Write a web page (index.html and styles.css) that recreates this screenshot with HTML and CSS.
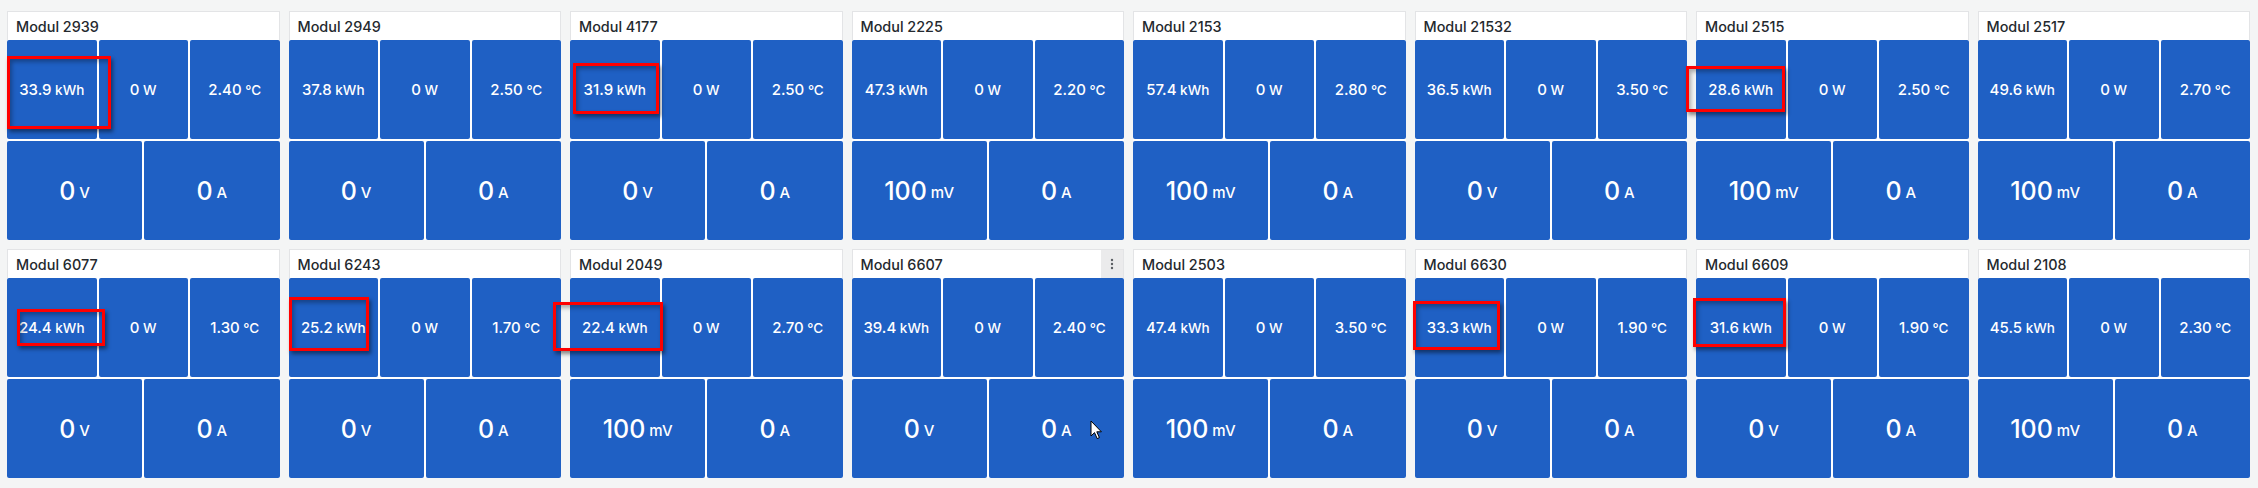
FILE: index.html
```html
<!DOCTYPE html>
<html lang="en">
  <head>
    <meta charset="UTF-8" />
    <meta name="viewport" content="width=device-width, initial-scale=1.0" />
    <title>Module</title>
    <link rel="stylesheet" href="styles.css">
  </head>
  <body>
    <div class="dashboard" id="dashboard"></div>
    <script>
      const dashboard = document.getElementById('dashboard')

      // mark = [left, top, width, height] of the red annotation box, relative to the panel
      const modules = [
        { name: 'Modul 2939', energy: '33.9', temp: '2.40', volt: '0', mark: [0, 45, 104, 73] },
        { name: 'Modul 2949', energy: '37.8', temp: '2.50', volt: '0' },
        { name: 'Modul 4177', energy: '31.9', temp: '2.50', volt: '0', mark: [3, 52, 86, 51] },
        { name: 'Modul 2225', energy: '47.3', temp: '2.20', volt: '100' },
        { name: 'Modul 2153', energy: '57.4', temp: '2.80', volt: '100' },
        { name: 'Modul 21532', energy: '36.5', temp: '3.50', volt: '0' },
        { name: 'Modul 2515', energy: '28.6', temp: '2.50', volt: '100', mark: [-10, 55, 99, 46] },
        { name: 'Modul 2517', energy: '49.6', temp: '2.70', volt: '100' },
        { name: 'Modul 6077', energy: '24.4', temp: '1.30', volt: '0', mark: [10, 60, 88, 37] },
        { name: 'Modul 6243', energy: '25.2', temp: '1.70', volt: '0', mark: [0, 48, 80, 54] },
        { name: 'Modul 2049', energy: '22.4', temp: '2.70', volt: '100', mark: [-17, 53, 110, 49] },
        { name: 'Modul 6607', energy: '39.4', temp: '2.40', volt: '0', hover: true },
        { name: 'Modul 2503', energy: '47.4', temp: '3.50', volt: '100' },
        { name: 'Modul 6630', energy: '33.3', temp: '1.90', volt: '0', mark: [-2, 52, 87, 49] },
        { name: 'Modul 6609', energy: '31.6', temp: '1.90', volt: '0', mark: [-3, 49, 93, 49] },
        { name: 'Modul 2108', energy: '45.5', temp: '2.30', volt: '100' },
      ]

      for (const mod of modules) {
        const panel = document.createElement('div')
        panel.className = 'panel'
        const voltUnit = mod.volt === '100' ? 'mV' : 'V'
        panel.innerHTML = `
          <div class="panel-header">
            <span class="panel-title">${mod.name}</span>
            ${mod.hover ? `<span class="panel-menu">
              <svg width="4" height="12" viewBox="0 0 4 12"><circle cx="2" cy="2" r="1.2"/><circle cx="2" cy="6" r="1.2"/><circle cx="2" cy="10" r="1.2"/></svg>
            </span>` : ''}
          </div>
          <div class="panel-body">
            <div class="stat">${mod.energy}<span class="unit"> kWh</span></div>
            <div class="stat">0<span class="unit"> W</span></div>
            <div class="stat">${mod.temp}<span class="unit"> °C</span></div>
            <div class="stat wide">${mod.volt}<span class="unit"> ${voltUnit}</span></div>
            <div class="stat wide">0<span class="unit"> A</span></div>
          </div>
        `
        if (mod.mark) {
          const [left, top, width, height] = mod.mark
          const mark = document.createElement('div')
          mark.className = 'mark'
          mark.style.left = left + 'px'
          mark.style.top = top + 'px'
          mark.style.width = width + 'px'
          mark.style.height = height + 'px'
          panel.appendChild(mark)
        }
        if (mod.hover) {
          const cursor = document.createElement('div')
          cursor.className = 'cursor'
          cursor.innerHTML = '<svg width="13" height="20" viewBox="0 0 13 20"><path d="M1 1 L1 16 L4.5 12.6 L7.2 18.6 L9.4 17.6 L6.8 11.8 L11.4 11.8 Z" fill="#fff" stroke="#000" stroke-width="1" stroke-linejoin="round"/></svg>'
          panel.appendChild(cursor)
        }
        dashboard.appendChild(panel)
      }
    </script>
  </body>
</html>
```

FILE: styles.css
```css
* {
  margin: 0;
  padding: 0;
  box-sizing: border-box;
}
body {
  font-family: Inter, "Noto Sans", "Liberation Sans", sans-serif;
  background-color: #f4f5f5;
  color: #24292e;
}
.dashboard {
  display: grid;
  grid-template-columns: repeat(8, 1fr);
  grid-auto-rows: 229px;
  gap: 9px;
  padding: 11px 8px 0 7px;
}
.panel {
  position: relative;
  display: flex;
  flex-direction: column;
  background-color: #fff;
}
.panel-header {
  height: 29px;
  display: flex;
  align-items: center;
  padding-left: 8px;
  border: 1px solid #e3e4e6;
  border-bottom: none;
  font-size: 14.4px;
  font-weight: 500;
}
.panel-menu {
  margin-left: auto;
  width: 22px;
  height: 100%;
  display: flex;
  align-items: center;
  justify-content: center;
  background-color: #ebebec;
}
.panel-menu svg {
  fill: #5b5f63;
}
.panel-body {
  flex: 1;
  display: grid;
  grid-template-columns: repeat(6, 1fr);
  grid-template-rows: 1fr 1fr;
  gap: 2px;
}
.stat {
  grid-column: span 2;
  display: flex;
  align-items: center;
  justify-content: center;
  white-space: pre;
  background-color: #1f60c4;
  border-radius: 2px;
  color: #fff;
  font-size: 15px;
  font-weight: 500;
}
.stat .unit {
  font-size: 13.5px;
}
.stat.wide {
  grid-column: span 3;
  font-size: 25px;
  font-weight: 500;
}
.stat.wide .unit {
  font-size: 15px;
  padding-top: 3px;
}
.mark {
  position: absolute;
  border: 3px solid #f00;
  box-shadow: 2px 3px 4px rgba(0, 0, 0, 0.45), inset 2px 3px 4px rgba(0, 0, 0, 0.3);
  pointer-events: none;
}
.cursor {
  position: absolute;
  left: 238px;
  top: 171px;
  line-height: 0;
}
```
